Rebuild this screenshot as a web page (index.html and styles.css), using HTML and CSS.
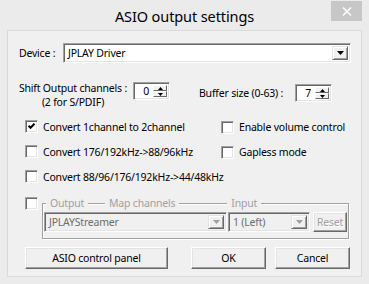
FILE: index.html
```html
<!DOCTYPE html>
<html>
<head>
<meta charset="utf-8">
<title>ASIO output settings</title>
<link rel="stylesheet" href="styles.css">
</head>
<body>
<div class="window">
  <div class="titlebar">
    <span class="spacer"></span>
    <span class="title">ASIO output settings</span>
    <span class="close">
      <svg width="10" height="9" viewBox="0 0 10 9"><path d="M1 0.5 L9 8.5 M9 0.5 L1 8.5" stroke="#fff" stroke-width="1.5" fill="none"/></svg>
    </span>
  </div>
  <div class="panel">
    <div class="device-row">
      <span class="device-lbl">Device :</span>
      <div class="combo device-combo">
        <span class="combo-text">JPLAY Driver</span>
        <span class="drop"><svg width="7" height="4" viewBox="0 0 7 4"><path d="M0 0 H7 L3.5 4 Z" fill="#000"/></svg></span>
      </div>
    </div>
    <div class="shift-row">
      <div class="shift-lbl">Shift Output channels :<br>(2 for S/PDIF)</div>
      <div class="spin spin-shift">
        <span class="spin-val">0</span>
        <span class="spin-btns">
          <span class="sb"><svg width="5" height="3" viewBox="0 0 5 3"><path d="M0 3 H5 L2.5 0 Z" fill="#000"/></svg></span>
          <span class="sb"><svg width="5" height="3" viewBox="0 0 5 3"><path d="M0 0 H5 L2.5 3 Z" fill="#000"/></svg></span>
        </span>
      </div>
      <span class="buf-lbl">Buffer size (0-63) :</span>
      <div class="spin spin-buf">
        <span class="spin-val">7</span>
        <span class="spin-btns">
          <span class="sb"><svg width="5" height="3" viewBox="0 0 5 3"><path d="M0 3 H5 L2.5 0 Z" fill="#000"/></svg></span>
          <span class="sb"><svg width="5" height="3" viewBox="0 0 5 3"><path d="M0 0 H5 L2.5 3 Z" fill="#000"/></svg></span>
        </span>
      </div>
    </div>
    <div class="checks">
      <div class="chk"><span class="box"><svg width="9" height="9" viewBox="0 0 9 9"><path d="M1.5 3.8 L3.5 5.8 L7.5 1.8" stroke="#000" stroke-width="2" fill="none"/></svg></span><span>Convert 1channel to 2channel</span></div>
      <div class="chk right"><span class="box"></span><span>Enable volume control</span></div>
      <div class="chk"><span class="box"></span><span>Convert 176/192kHz-&gt;88/96kHz</span></div>
      <div class="chk right"><span class="box"></span><span>Gapless mode</span></div>
      <div class="chk"><span class="box"></span><span>Convert 88/96/176/192kHz-&gt;44/48kHz</span></div>
    </div>
    <div class="map-row">
      <span class="box disabled"></span>
      <div class="group">
        <div class="group-labels">
          <span class="glbl g-out">Output</span>
          <span class="glbl g-map">Map channels</span>
          <span class="glbl g-in">Input</span>
        </div>
        <div class="group-body">
          <div class="combo dis-combo out-combo">
            <span class="combo-text">JPLAYStreamer</span>
            <span class="drop"><svg width="7" height="4" viewBox="0 0 7 4"><path d="M0 0 H7 L3.5 4 Z" fill="#a0a0a0"/></svg></span>
          </div>
          <div class="combo dis-combo in-combo">
            <span class="combo-text">1 (Left)</span>
            <span class="drop"><svg width="7" height="4" viewBox="0 0 7 4"><path d="M0 0 H7 L3.5 4 Z" fill="#a0a0a0"/></svg></span>
          </div>
          <button class="btn reset-btn">Reset</button>
        </div>
      </div>
    </div>
    <div class="btn-row">
      <button class="btn asio-btn">ASIO control panel</button>
      <button class="btn ok-btn">OK</button>
      <button class="btn cancel-btn">Cancel</button>
    </div>
  </div>
</div>
</body>
</html>
```
FILE: styles.css
```css
* { box-sizing: border-box; }
html, body { margin: 0; padding: 0; }
body {
  width: 369px;
  height: 284px;
  overflow: hidden;
  background: #ebebeb;
  font-family: "Noto Sans", "Open Sans", sans-serif;
  font-size: 10.5px;
  letter-spacing: -0.2px;
  color: #000;
}
.window {
  width: 369px;
  height: 284px;
  display: flex;
  flex-direction: column;
}
.titlebar {
  height: 30px;
  display: grid;
  grid-template-columns: 1fr auto 1fr;
  align-items: start;
  padding: 0 7px;
}
.title {
  font-size: 14.5px;
  letter-spacing: -0.1px;
  line-height: 20px;
  margin-top: 6px;
  color: #000;
}
.close {
  justify-self: end;
  margin-top: 1px;
  width: 31px;
  height: 20px;
  background: #c7c7c7;
  display: flex;
  align-items: center;
  justify-content: center;
}
.close svg { display: block; }
.panel {
  margin: 0 7px;
  height: 247px;
  border: 1px solid #dadada;
  background: #f0f0f0;
  display: flex;
  flex-direction: column;
}

/* sunken field */
.combo, .spin {
  border: 1px solid;
  border-color: #a0a0a0 #fff #fff #a0a0a0;
  box-shadow: inset 1px 1px #696969, inset -1px -1px #e3e3e3;
  background: #fff;
  display: flex;
  align-items: stretch;
  padding: 2px;
}
.combo-text {
  flex: 1;
  line-height: 14px;
  padding-left: 2px;
  white-space: nowrap;
  overflow: hidden;
}
.drop {
  width: 16px;
  background: #f0f0f0;
  border: 1px solid;
  border-color: #e3e3e3 #696969 #696969 #e3e3e3;
  box-shadow: inset 1px 1px #fff, inset -1px -1px #a0a0a0;
  display: flex;
  align-items: center;
  justify-content: center;
}
.drop svg { display: block; }

.device-row {
  display: flex;
  align-items: center;
  margin: 12px 0 0 11px;
}
.device-lbl { width: 44px; white-space: nowrap; }
.device-combo { width: 288px; height: 20px; }

.shift-row {
  display: flex;
  align-items: flex-start;
  margin: 18px 0 0 8px;
}
.shift-lbl {
  width: 114px;
  text-align: center;
  line-height: 14px;
  white-space: nowrap;
}
.spin { width: 37px; height: 18px; padding: 2px 2px 2px 2px; }
.spin-val { flex: 1; text-align: right; padding-right: 4px; line-height: 13px; }
.spin-btns { width: 14px; display: flex; flex-direction: column; }
.sb {
  flex: 1;
  background: #f0f0f0;
  border: 1px solid;
  border-color: #fff #696969 #696969 #fff;
  display: flex;
  align-items: center;
  justify-content: center;
}
.sb svg { display: block; }
.spin-shift { margin: 1px 0 0 3px; }
.buf-lbl {
  width: 91px;
  white-space: nowrap;
  line-height: 14px;
  margin: 5px 0 0 29px;
}
.spin-buf { margin: 3px 0 0 5px; }

.box {
  width: 13px;
  height: 13px;
  flex: none;
  background: #fff;
  border: 1px solid;
  border-color: #a0a0a0 #fff #fff #a0a0a0;
  box-shadow: inset 1px 1px #696969, inset -1px -1px #e3e3e3;
  display: flex;
  align-items: center;
  justify-content: center;
}
.box svg { display: block; }

.checks {
  display: grid;
  grid-template-columns: 196px auto;
  grid-auto-rows: 25px;
  margin: 5px 0 0 17px;
}
.chk {
  display: flex;
  align-items: center;
  gap: 5px;
  white-space: nowrap;
}
.chk.right { margin-top: 1px; }

.map-row {
  display: flex;
  align-items: flex-start;
  margin: 8px 0 0 17px;
}
.group {
  margin: 6px 0 0 4px;
  width: 307px;
  height: 36px;
  border: 1px solid #a0a0a0;
  box-shadow: inset 1px 1px #fff, 1px 1px #fff;
}
.group-labels {
  display: flex;
  margin-top: -7px;
  height: 13px;
  line-height: 13px;
  color: #a0a0a0;
}
.glbl { background: #f0f0f0; padding: 0 4px; white-space: nowrap; }
.g-out { margin-left: 3px; }
.g-map { margin-left: 17px; }
.g-in { margin-left: 48px; }
.group-body {
  display: flex;
  margin: 2px 0 0 1px;
  height: 20px;
}
.dis-combo { background: #f0f0f0; color: #6d6d6d; height: 20px; }
.out-combo { width: 183px; }
.in-combo { width: 82px; margin-left: 1px; }

.btn {
  font: inherit;
  letter-spacing: inherit;
  color: #000;
  background: #f0f0f0;
  border: 1px solid;
  border-color: #fff #696969 #696969 #fff;
  box-shadow: inset -1px -1px #a0a0a0, inset 1px 1px #e3e3e3;
  padding: 0;
  margin: 0;
  height: 22px;
}
.reset-btn {
  width: 34px;
  height: 20px;
  margin-left: 3px;
  color: #a0a0a0;
  text-shadow: 1px 1px #fff;
}
.btn-row {
  display: flex;
  margin: 8px 0 0 17px;
}
.asio-btn { width: 143px; }
.ok-btn { width: 75px; margin-left: 23px; }
.cancel-btn { width: 75px; margin-left: 9px; }
```
